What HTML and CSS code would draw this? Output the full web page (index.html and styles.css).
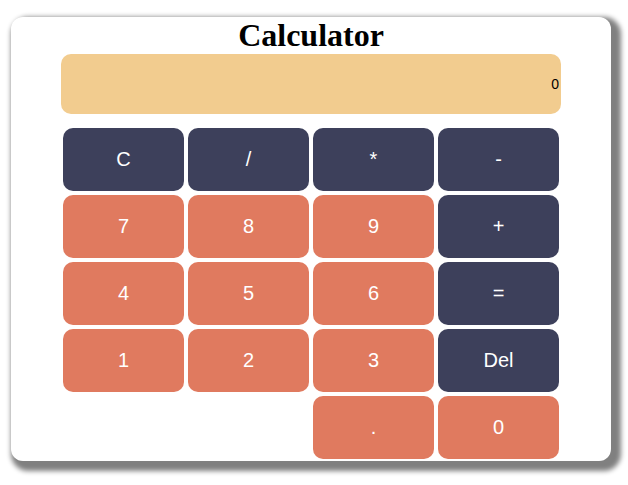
FILE: index.html
```html
<!DOCTYPE html>
<html lang="en">
<head>
<meta charset="utf-8">
<title>Calculator</title>
<link rel="stylesheet" href="styles.css">
</head>
<body>
<main class="calculator">
  <h1 class="title">Calculator</h1>
  <input class="display" type="text" value="0" aria-label="Result" readonly>
  <div class="keys">
    <button class="key operator" type="button">C</button>
    <button class="key operator" type="button">/</button>
    <button class="key operator" type="button">*</button>
    <button class="key operator" type="button">-</button>
    <button class="key" type="button">7</button>
    <button class="key" type="button">8</button>
    <button class="key" type="button">9</button>
    <button class="key operator" type="button">+</button>
    <button class="key" type="button">4</button>
    <button class="key" type="button">5</button>
    <button class="key" type="button">6</button>
    <button class="key operator" type="button">=</button>
    <button class="key" type="button">1</button>
    <button class="key" type="button">2</button>
    <button class="key" type="button">3</button>
    <button class="key operator" type="button">Del</button>
    <button class="key point" type="button">.</button>
    <button class="key" type="button">0</button>
  </div>
</main>
</body>
</html>
```
FILE: styles.css
```css
* {
  box-sizing: border-box;
}

body {
  margin: 0;
  padding: 17px 17px 24px 11px;
  background: #fff;
}

.calculator {
  display: flex;
  flex-direction: column;
  align-items: center;
  max-width: 600px;
  padding: 0 50px 2px;
  border-radius: 12px;
  background: #fff;
  box-shadow: 5px 5px 5px 5px #808080;
}

.title {
  margin: 0;
  font: bold 32px/37px "Liberation Serif", "Times New Roman", serif;
  color: #000;
}

.display {
  width: 100%;
  height: 60px;
  margin: 0 0 14px;
  padding: 1px 2px;
  border: 0;
  border-radius: 10px;
  background: #f2cc8f;
  color: #000;
  font: 14px "Liberation Sans", Arial, sans-serif;
  text-align: right;
}

.keys {
  display: grid;
  grid-template-columns: repeat(4, 1fr);
  grid-auto-rows: 63px;
  gap: 4px;
  width: 100%;
  padding: 0 2px;
}

.key {
  padding: 0;
  border: 0;
  border-radius: 10px;
  background: #e07a5f;
  color: #fff;
  font: 20px "Liberation Sans", Arial, sans-serif;
}

.operator {
  background: #3d405b;
}

.point {
  grid-column: 3;
}
```
